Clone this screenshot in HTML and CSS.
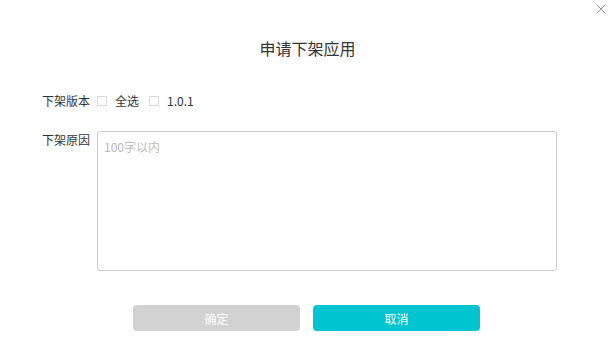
FILE: index.html
```html
<!DOCTYPE html>
<html lang="zh-CN">
<head>
    <meta charset="UTF-8">
    <title>申请下架应用</title>
    <link rel="stylesheet" href="styles.css">
</head>
<body>
    <div class="dialog">
        <a class="close" title="关闭">
            <svg width="10" height="10" viewBox="0 0 10 10"><path d="M0.5 0.5 L9.5 9.5 M9.5 0.5 L0.5 9.5" stroke="#999" stroke-width="1" fill="none"/></svg>
        </a>
        <h2 class="title">申请下架应用</h2>

        <div class="form">
            <div class="row">
                <span class="label">下架版本</span>
                <label class="check"><input type="checkbox"><span class="box"></span>全选</label>
                <label class="check"><input type="checkbox"><span class="box"></span>1.0.1</label>
            </div>
            <div class="row row-top">
                <span class="label">下架原因</span>
                <textarea class="reason" placeholder="100字以内"></textarea>
            </div>
        </div>

        <div class="actions">
            <button class="btn btn-disabled" disabled>确定</button>
            <button class="btn btn-primary">取消</button>
        </div>
    </div>
</body>
</html>
```

FILE: styles.css
```css
body {
    margin: 0;
    font-family: "Noto Sans CJK SC", "Noto Sans", sans-serif;
    color: #333;
    background: #fff;
}
.dialog {
    position: relative;
    width: 615px;
    height: 355px;
    box-sizing: border-box;
    padding-top: 37px;
}
.close {
    position: absolute;
    top: 4px;
    right: 9px;
    width: 10px;
    height: 10px;
    cursor: pointer;
}
.close svg {
    display: block;
}
.title {
    margin: 0;
    font-size: 16px;
    font-weight: normal;
    line-height: 22px;
    text-align: center;
    color: #333;
}
.form {
    padding-left: 42px;
    margin-top: 34px;
    font-size: 12px;
}
.row {
    display: flex;
    align-items: center;
    height: 16px;
    line-height: 16px;
}
.row-top {
    align-items: flex-start;
    height: auto;
    margin-top: 22px;
}
.label {
    width: 55px;
    flex-shrink: 0;
    color: #333;
}
.row-top .label {
    padding-top: 1px;
}
.check {
    display: flex;
    align-items: center;
    margin-right: 10px;
    cursor: pointer;
    color: #333;
}
.check input {
    display: none;
}
.box {
    width: 8px;
    height: 8px;
    border: 1px solid #d9d9d9;
    margin-right: 8px;
}
.reason {
    width: 460px;
    height: 140px;
    box-sizing: border-box;
    border: 1px solid #ccc;
    border-radius: 3px;
    padding: 7px 6px;
    font-family: inherit;
    font-size: 12px;
    line-height: 16px;
    color: #333;
    resize: none;
    outline: none;
    margin: 0;
}
.reason::placeholder {
    color: #bbb;
}
.actions {
    display: flex;
    gap: 13px;
    margin-top: 34px;
    padding-left: 133px;
}
.btn {
    width: 167px;
    height: 26px;
    border: none;
    border-radius: 4px;
    color: #fff;
    font-family: inherit;
    font-size: 12px;
    padding: 0;
    cursor: pointer;
}
.btn-disabled {
    background: #d2d2d2;
    cursor: default;
}
.btn-primary {
    background: #00c5d1;
}
```
